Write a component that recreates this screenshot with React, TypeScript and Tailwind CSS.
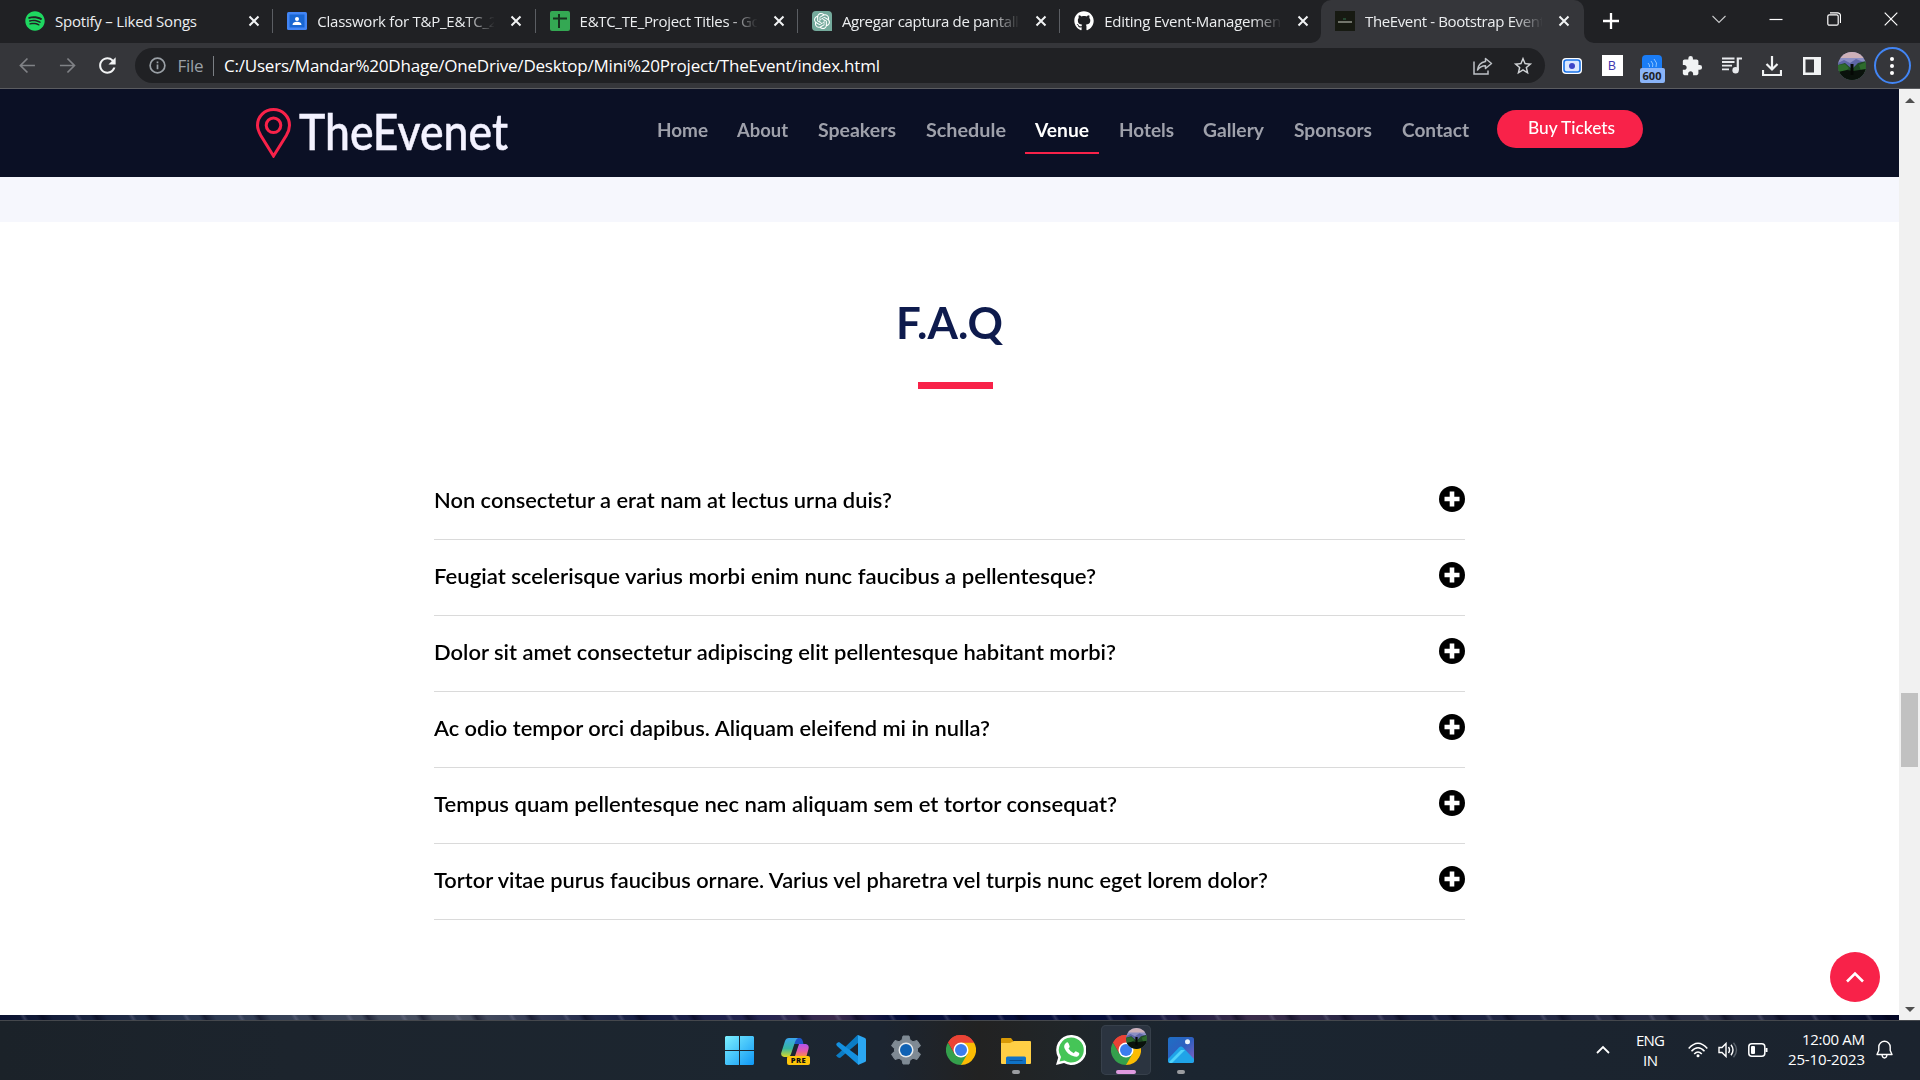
import React, { useLayoutEffect, useRef } from "react";
import { FaSpotify, FaGithub } from "react-icons/fa";
import { MdStarBorder, MdRefresh, MdExtension } from "react-icons/md";
import { SiOpenai } from "react-icons/si";

const UI = "font-['Open_Sans','Noto_Sans',sans-serif]";
const SITE = "font-['Lato','Open_Sans',sans-serif]";

/* A single line of text that spans `w` pixels, either by tracking or by widening its letters. */
function Fit({ w, className = "", stretch = false, children }: { w: number; className?: string; stretch?: boolean; children: string }) {
  const ref = useRef<HTMLSpanElement>(null);
  useLayoutEffect(() => {
    const el = ref.current;
    if (!el) return;
    el.style.letterSpacing = "0px";
    el.style.transform = "none";
    const natural = el.getBoundingClientRect().width;
    if (stretch) el.style.transform = `scaleX(${w / natural})`;
    else el.style.letterSpacing = `${(w - natural) / Math.max(1, children.length - 1)}px`;
  }, [w, stretch, children]);
  return (
    <span className="block shrink-0 whitespace-nowrap" style={{ width: w }}>
      <span ref={ref} className={`inline-block origin-left whitespace-nowrap ${className}`}>
        {children}
      </span>
    </span>
  );
}

function Cross({ className = "" }: { className?: string }) {
  return (
    <svg viewBox="0 0 12 12" className={`h-3 w-3 shrink-0 ${className}`} fill="none" stroke="#f1f3f4" strokeWidth="2">
      <path d="M1.5 1.5l9 9M10.5 1.5l-9 9" />
    </svg>
  );
}

const ClassroomIcon = () => (
  <svg viewBox="0 0 20 20" className="h-5 w-5">
    <rect y="1" width="20" height="18" rx="1.5" fill="#4285f4" />
    <rect x="2.5" y="3.5" width="15" height="13" fill="#1967d2" />
    <circle cx="10" cy="8" r="2" fill="#fff" />
    <path d="M5.5 14c0-2.2 2-3.200 4.500-3.200s4.500 1 4.500 3.200z" fill="#fff" />
  </svg>
);
const SheetsIcon = () => (
  <svg viewBox="0 0 20 20" className="h-5 w-5">
    <rect width="20" height="20" rx="2" fill="#34a853" />
    <path d="M9 3v14M3 7.500h14" stroke="#17301f" strokeWidth="2" />
  </svg>
);
const GptIcon = () => (
  <span className="flex h-5 w-5 items-center justify-center rounded-t-[4px] rounded-bl-[4px] bg-[#74aa9c]">
    <SiOpenai className="h-4 w-4 text-white" />
  </span>
);
const EventIcon = () => (
  <svg viewBox="0 0 20 20" className="h-5 w-5">
    <rect width="20" height="20" fill="#171a12" />
    <path d="M3 11h14" stroke="#a5a89d" strokeWidth="1.300" />
    <path d="M8 8h3" stroke="#28563a" strokeWidth="1.500" />
  </svg>
);

const tabs = [
  { icon: <FaSpotify className="h-5 w-5 text-[#1ed760]" />, title: "Spotify – Liked Songs", w: 142, fade: false },
  { icon: <ClassroomIcon />, title: "Classwork for T&P_E&TC_2", w: 180, fade: true },
  { icon: <SheetsIcon />, title: "E&TC_TE_Project Titles - Go", w: 181, fade: true },
  { icon: <GptIcon />, title: "Agregar captura de pantall", w: 177, fade: true },
  { icon: <FaGithub className="h-5 w-5 text-white" />, title: "Editing Event-Managemen", w: 177, fade: true },
];

function TabBody({ icon, title, w, fade }: { icon: React.ReactNode; title: string; w: number; fade: boolean }) {
  return (
    <>
      <span className="h-5 w-5 shrink-0">{icon}</span>
      <span
        className={`ml-[10px] w-[177px] shrink-0 text-[15px] leading-5 text-[#eceef0] ${UI} ${
          fade ? "[mask-image:linear-gradient(to_right,black_148px,transparent_178px)]" : ""
        }`}
      >
        <Fit w={w}>{title}</Fit>
      </span>
      <Cross className="ml-[16px]" />
    </>
  );
}

function TabStrip() {
  return (
    <div className="flex h-[43px] bg-[#202124]">
      <div className="flex h-full pl-[11px]">
        {tabs.map((t, i) => (
          <div key={t.title} className="flex h-[42px] w-[262.300px] shrink-0 items-center pl-[14px]">
            <TabBody {...t} />
            <span className={`ml-auto h-6 w-px ${i < 4 ? "bg-[#5b5e63]" : ""}`} />
          </div>
        ))}
      </div>
      <div className="relative -ml-[1.500px] flex h-[43px] w-[263px] shrink-0 items-center rounded-t-[10px] bg-[#35363a] pb-px pl-[14px]">
        <TabBody icon={<EventIcon />} title="TheEvent - Bootstrap Event" w={180} fade />
        <svg viewBox="0 0 10 10" className="absolute bottom-0 -left-[10px] h-[10px] w-[10px]">
          <path d="M10 0v10H0A10 10 0 0 0 10 0z" fill="#35363a" />
        </svg>
        <svg viewBox="0 0 10 10" className="absolute -right-[10px] bottom-0 h-[10px] w-[10px]">
          <path d="M0 0v10h10A10 10 0 0 1 0 0z" fill="#35363a" />
        </svg>
      </div>
      <svg viewBox="0 0 16 16" className="mt-[13px] ml-[19px] h-4 w-4" stroke="#fff" strokeWidth="2.300">
        <path d="M8 0v16M0 8h16" />
      </svg>
      <div className="mr-[22px] ml-auto flex h-[37px] items-center gap-[43.300px]">
        <svg viewBox="0 0 14 14" className="h-[14px] w-[14px]" fill="none" stroke="#c8c9cb" strokeWidth="1.100">
          <path d="M.5 4L7 10.500 13.500 4" />
        </svg>
        <svg viewBox="0 0 14 14" className="h-[14px] w-[14px]" stroke="#fff" strokeWidth="1.200">
          <path d="M.5 7.500h13" />
        </svg>
        <svg viewBox="0 0 14 14" className="h-[14px] w-[14px]" fill="none" stroke="#fff" strokeWidth="1.200">
          <rect x=".8" y="2.800" width="10.400" height="10.400" rx="1.500" />
          <path d="M3 .8h7.500a3 3 0 0 1 3 3V11" />
        </svg>
        <svg viewBox="0 0 14 14" className="h-[14px] w-[14px]" fill="none" stroke="#fff" strokeWidth="1.200">
          <path d="M.7.700l12.600 12.600M13.300.7L.7 13.300" />
        </svg>
      </div>
    </div>
  );
}

function Cell({ children }: { children: React.ReactNode }) {
  return <span className="flex w-10 shrink-0 items-center justify-center">{children}</span>;
}

function Avatar({ className = "" }: { className?: string }) {
  return (
    <svg viewBox="0 0 28 28" className={`rounded-full ${className}`}>
      <rect width="28" height="28" fill="#8c8fc4" />
      <path d="M0 0h28v6H0z" fill="#cdb0b8" />
      <path d="M0 11l6-3 6 3 6-4 10 4v6H0z" fill="#5e66a6" />
      <path d="M0 13l7-2 7 6 6-6 8-2v19H0z" fill="#1f4a25" />
      <path d="M0 13l7-1 4 4-7 6-4 1zM28 10l-7 3 2 6 5 1z" fill="#2e6b2c" />
      <path d="M0 20l9-2 6 1 13-2v11H0z" fill="#0a120c" />
      <path d="M12.500 12h3v11h-3z" fill="#050805" />
    </svg>
  );
}

function Toolbar() {
  return (
    <div className="flex h-[46px] items-center border-b border-[#5b5c60] bg-[#35363a] pr-2">
      <svg viewBox="0 0 18 18" className="ml-[19px] h-[17px] w-[17px]" fill="none" stroke="#808286" strokeWidth="1.800">
        <path d="M17 9H1.500M9 1.500L1.500 9 9 16.500" />
      </svg>
      <svg viewBox="0 0 18 18" className="ml-[23px] h-[17px] w-[17px]" fill="none" stroke="#808286" strokeWidth="1.800">
        <path d="M1 9h15.500M9 1.500L16.500 9 9 16.500" />
      </svg>
      <MdRefresh className="ml-[19px] h-[25px] w-[25px] text-[#f1f3f4]" />
      <div className="ml-[15px] flex h-[35px] w-[1410px] shrink-0 items-center rounded-full bg-[#202124]">
        <svg viewBox="0 0 18 18" className="ml-[14px] h-[17px] w-[17px] shrink-0" fill="none" stroke="#9aa0a6" strokeWidth="1.800">
          <circle cx="9" cy="9" r="7.800" />
          <path d="M9 8v5M9 4.700v1.800" />
        </svg>
        <div className={`ml-[12px] flex items-center text-[17px] leading-6 ${UI}`}>
          <Fit w={26} className="text-[#9aa0a6]">File</Fit>
          <span className="ml-[9px] h-5 w-[1.500px] bg-[#7b7f84]" />
          <span className="w-[10px]" />
          <Fit w={656} className="text-white">C:/Users/Mandar%20Dhage/OneDrive/Desktop/Mini%20Project/TheEvent/index.html</Fit>
        </div>
        <svg viewBox="0 0 20 18" className="ml-auto h-[18px] w-5" fill="none" stroke="#bdc1c6" strokeWidth="1.500">
          <path d="M1 4.500V17h14v-3.500" />
          <path d="M12.500 1.500l6 5-6 5V8.700C9 8.700 6.500 10 4.500 13c.5-4.500 3.500-7.800 8-8.500z" strokeLinejoin="round" />
        </svg>
        <MdStarBorder className="mr-[11px] ml-[19px] h-[22px] w-[22px] text-[#d0d3d6]" />
      </div>
      <div className="ml-[7.500px] flex items-center">
        <Cell>
          <svg viewBox="0 0 20 16" className="h-4 w-5">
            <rect width="20" height="16" rx="4" fill="#fff" />
            <rect x="2" y="2" width="16" height="12" rx="2.500" fill="#dbe8ff" stroke="#1a73e8" strokeWidth="1.600" />
            <circle cx="10" cy="8" r="3" fill="#3d46c8" />
          </svg>
        </Cell>
        <Cell>
          <span className="flex h-[21px] w-[21px] items-center justify-center bg-white font-['Liberation_Sans',sans-serif] text-[12px] leading-none text-[#4038b0]">B</span>
        </Cell>
        <Cell>
          <span className="mt-[7px] flex h-7 flex-col items-center">
            <svg viewBox="0 0 20 13" className="h-[13px] w-5 shrink-0">
              <path d="M0 13V4a4 4 0 0 1 4-4h12a4 4 0 0 1 4 4v9z" fill="#1a7cf5" />
              <path d="M6 8q2 2 1.500 4M9 6q3 3 1.500 6M12 4q4 4 2 8" stroke="#8fc4ff" fill="none" />
            </svg>
            <span className={`flex h-[15px] w-[25px] items-center justify-center rounded-[2px] bg-[#8ab4f8] text-[11px] leading-none font-bold text-[#202124] ${UI}`}>600</span>
          </span>
        </Cell>
        <Cell><MdExtension className="h-[22px] w-[22px] text-[#f1f3f4]" /></Cell>
        <Cell>
          <svg viewBox="0 0 20 17" className="h-[17px] w-5" fill="none" stroke="#e8eaed" strokeWidth="1.800">
            <path d="M0 1.500h12.500M0 5h12.500M0 8.700h10M0 12.300h7" />
            <path d="M15.800 13V1.500H20" strokeWidth="2.200" />
            <circle cx="13.600" cy="13.200" r="3.200" fill="#e8eaed" stroke="none" />
          </svg>
        </Cell>
        <Cell>
          <svg viewBox="0 0 20 20" className="h-5 w-5" fill="none" stroke="#f1f3f4" strokeWidth="2.200">
            <path d="M10 0v13M4.500 8L10 13.500 15.500 8M1 14v5h18v-5" />
          </svg>
        </Cell>
        <Cell>
          <svg viewBox="0 0 18 18" className="h-[18px] w-[18px]">
            <path d="M0 0h18v18H0zM2.500 2.500v13H11v-13z" fill="#f1f3f4" fillRule="evenodd" />
          </svg>
        </Cell>
        <Cell><Avatar className="h-7 w-7" /></Cell>
        <Cell>
          <span className="flex h-[37px] w-[37px] shrink-0 flex-col items-center justify-center gap-[3px] rounded-full border-2 border-[#4285f4]">
            <i className="h-1 w-1 rounded-full bg-white" />
            <i className="h-1 w-1 rounded-full bg-white" />
            <i className="h-1 w-1 rounded-full bg-white" />
          </span>
        </Cell>
      </div>
    </div>
  );
}

const nav = [
  { label: "Home", w: 51 },
  { label: "About", w: 51 },
  { label: "Speakers", w: 78 },
  { label: "Schedule", w: 80 },
  { label: "Venue", w: 54 },
  { label: "Hotels", w: 55 },
  { label: "Gallery", w: 61 },
  { label: "Sponsors", w: 78 },
  { label: "Contact", w: 67 },
];

function SiteHeader() {
  return (
    <header className={`flex h-[88px] shrink-0 bg-[#0b1025] ${SITE}`}>
      <svg viewBox="0 0 36 50" className="mt-[19px] ml-[256px] h-[50px] w-9" fill="none" stroke="#f82249" strokeWidth="3">
        <path d="M17.500 1.500C8.500 1.500 1.500 8.600 1.500 17.300c0 4 1.400 6.800 3.300 10.200L17.500 48l12.800-20.500c2-3.400 3.200-6.200 3.200-10.200C33.500 8.600 26.500 1.500 17.500 1.500z" />
        <circle cx="17.500" cy="17.300" r="7.300" />
      </svg>
      <div className="mt-[11px] ml-[7px] text-[50px] leading-[62px] font-medium text-[#f3f2ff] [-webkit-text-stroke:0.500px_#f3f2ff]">
        <Fit stretch w={209}>TheEvenet</Fit>
      </div>
      <nav className="mt-[26px] ml-[139px] flex h-[39px] gap-[10px]">
        {nav.map((n) => {
          const active = n.label === "Venue";
          return (
            <div
              key={n.label}
              className={`h-full shrink-0 px-[9.800px] pt-[3px] text-[18px] leading-6 font-bold ${
                active ? "border-b-2 border-[#f82249] text-white" : "text-[#9fa1ab]"
              }`}
            >
              <Fit stretch w={n.w}>{n.label}</Fit>
            </div>
          );
        })}
      </nav>
      <button className="mt-[21px] ml-[19px] flex h-[38px] w-[146px] items-center justify-center rounded-full bg-[#f82249] pb-[2px] text-[17px] font-medium text-white">
        <Fit stretch w={87}>Buy Tickets</Fit>
      </button>
    </header>
  );
}

const questions = [
  { q: "Non consectetur a erat nam at lectus urna duis?", w: 458 },
  { q: "Feugiat scelerisque varius morbi enim nunc faucibus a pellentesque?", w: 662 },
  { q: "Dolor sit amet consectetur adipiscing elit pellentesque habitant morbi?", w: 682 },
  { q: "Ac odio tempor orci dapibus. Aliquam eleifend mi in nulla?", w: 556 },
  { q: "Tempus quam pellentesque nec nam aliquam sem et tortor consequat?", w: 683 },
  { q: "Tortor vitae purus faucibus ornare. Varius vel pharetra vel turpis nunc eget lorem dolor?", w: 834 },
];

function Faq() {
  return (
    <section className={`relative flex h-[793px] shrink-0 flex-col bg-white ${SITE}`}>
      <h2 className="mt-[73px] ml-[896px] text-[44px] leading-[54px] font-bold text-[#0e1b4d]">
        <Fit stretch w={107}>F.A.Q</Fit>
      </h2>
      <div className="mt-[33px] ml-[918px] h-[7px] w-[75px] bg-[#f82249]" />
      <ul className="mt-[75px] ml-[434px] w-[1031px]">
        {questions.map(({ q, w }) => (
          <li key={q} className="flex h-[76px] justify-between border-b border-[#dadada] text-[20.500px] leading-[26px] font-semibold text-black">
            <span className="mt-[23px]">
              <Fit stretch w={w}>{q}</Fit>
            </span>
            <svg viewBox="0 0 26 26" className="mt-[22px] h-[26px] w-[26px]">
              <circle cx="13" cy="13" r="13" fill="#000" />
              <path d="M13 5.500v15M5.500 13h15" stroke="#fff" strokeWidth="4.600" />
            </svg>
          </li>
        ))}
      </ul>
      <button className="absolute right-[19px] bottom-[13px] flex h-[50px] w-[50px] items-center justify-center rounded-full bg-[#f82249]">
        <svg viewBox="0 0 18 12" className="h-3 w-[18px]" fill="none" stroke="#fff" strokeWidth="2.600">
          <path d="M1 10.500l8-8 8 8" />
        </svg>
      </button>
    </section>
  );
}

function Scrollbar() {
  return (
    <div className="flex w-[21px] shrink-0 flex-col items-center bg-[#f1f1f1]">
      <svg viewBox="0 0 10 5" className="mt-[9px] h-[5px] w-[10px]"><path d="M0 5l5-5 5 5z" fill="#505050" /></svg>
      <div className="mt-[590px] h-[74px] w-[17px] bg-[#c1c1c1]" />
      <svg viewBox="0 0 10 5" className="mt-auto mb-[8px] h-[5px] w-[10px]"><path d="M0 0l5 5 5-5z" fill="#505050" /></svg>
    </div>
  );
}

function Chrome() {
  return (
    <svg viewBox="0 0 30 30" className="h-[30px] w-[30px]">
      <path d="M15 15L2 7.500A15 15 0 0 1 28 7.500z" fill="#ea4335" />
      <path d="M15 15V7.500h13A15 15 0 0 1 15 30z" fill="#fbbc04" />
      <path d="M2 7.500A15 15 0 0 0 15 30l6.500-11.200L15 15l-6.500 3.700z" fill="#34a04c" />
      <path d="M15 7.500h13A15 15 0 0 0 2 7.500l6.500 11.200z" fill="#ea4335" />
      <circle cx="15" cy="15" r="7.500" fill="#fff" />
      <circle cx="15" cy="15" r="6" fill="#3b7ded" />
    </svg>
  );
}

function TaskIcon({ children, dot, active }: { children: React.ReactNode; dot?: boolean; active?: boolean }) {
  return (
    <div className={`relative flex h-[50px] w-[50px] items-center justify-center rounded-[5px] ${active ? "bg-[#2b3440] ring-1 ring-[#37404b] ring-inset" : ""}`}>
      {children}
      {dot && <span className="absolute bottom-px left-[21px] h-1 w-2 rounded-full bg-[#9a9ca0]" />}
      {active && <span className="absolute bottom-px left-[15px] h-1 w-5 rounded-full bg-[#df9be0]" />}
    </div>
  );
}

function Taskbar() {
  return (
    <footer className="flex h-[60px] shrink-0 border-t border-[#45484d] bg-[linear-gradient(to_right,#1b2229_0%,#1c242d_15%,#1c2630_40%,#1c2531_46%,#222222_51%,#20262a_56%,#1b2530_61%,#1b232e_100%)] text-white">
      <div className="mt-1 ml-[714px] flex gap-[5px]">
        <TaskIcon>
          <svg viewBox="0 0 29 29" className="h-[29px] w-[29px]">
            <defs>
              <linearGradient id="win" gradientUnits="userSpaceOnUse" x1="0" y1="0" x2="29" y2="29">
                <stop stopColor="#7cf0ff" />
                <stop offset="1" stopColor="#0f97f5" />
              </linearGradient>
            </defs>
            <path d="M1 0h13v14H0V1zM15 0h13l1 1v13H15zM0 15h14v14H1l-1-1zM15 15h14v13l-1 1H15z" fill="url(#win)" />
          </svg>
        </TaskIcon>
        <span className="-ml-[3px]" />
        <TaskIcon>
          <svg viewBox="0 0 30 28" className="mt-[3px] h-7 w-[30px]">
            <defs>
              <linearGradient id="cpa" x1="0" y1="0" x2="0" y2="1">
                <stop stopColor="#3aa5ee" />
                <stop offset=".55" stopColor="#37b6a0" />
                <stop offset="1" stopColor="#d8d928" />
              </linearGradient>
              <linearGradient id="cpb" x1="0" y1="0" x2="0" y2="1">
                <stop stopColor="#b153ef" />
                <stop offset=".6" stopColor="#e75aa8" />
                <stop offset="1" stopColor="#f88a4d" />
              </linearGradient>
            </defs>
            <path d="M12 0h7q2.500 0 3.500 6H13z" fill="#1d55c8" />
            <path d="M8 0h9q-2 1-3 4l-4 12q-1 3-4 3H3q-4-1-2.500-5L4 3q1-3 4-3z" fill="url(#cpa)" />
            <path d="M18 6h7q3.500 1 2.500 5l-2 7H14z" fill="url(#cpb)" />
            <rect x="6" y="18" width="23" height="9" rx="2" fill="#fec50b" />
            <text x="17.500" y="25.400" textAnchor="middle" fontSize="7.600" fontWeight="800" fontFamily="Open Sans, sans-serif" fill="#111" letterSpacing=".4">PRE</text>
          </svg>
        </TaskIcon>
        <TaskIcon>
          <svg viewBox="0 0 30 30" className="h-[30px] w-[30px]">
            <path d="M22 .5L3 19 0 21.500l2 2 2 .5L22 9z" transform="translate(0 -1)" fill="#0b7cc4" />
            <path d="M22 29.500L1 11q-1.500-1.800 0-3l2-1L22 21z" fill="#1490df" />
            <path d="M22 0l7 3q1 .5 1 1.500v21q0 1-1 1.500l-7 3z" fill="#2ba7f2" />
          </svg>
        </TaskIcon>
        <TaskIcon>
          <svg viewBox="0 0 30 30" className="h-[30px] w-[30px]">
            <path
              d="M12 1h6l1 4 3 1.700 4-1.200 3.500 5.200-3 3v2.600l3 3-3.500 5.200-4-1.200L19 25l-1 4h-6l-1-4-3-1.700-4 1.200-3.500-5.200 3-3v-2.600l-3-3L4 5.500l4 1.200L11 5z"
              fill="#7f8a94"
              stroke="#7f8a94"
              strokeLinejoin="round"
            />
            <circle cx="15" cy="15" r="7.500" fill="#e7ebee" />
            <circle cx="15" cy="15" r="6" fill="#0f62b4" />
          </svg>
        </TaskIcon>
        <TaskIcon><Chrome /></TaskIcon>
        <TaskIcon dot>
          <svg viewBox="0 0 30 28" className="mt-[2px] h-7 w-[30px]">
            <path d="M0 2q0-1 1-1h9l3 4-2 3H0z" fill="#d99a06" />
            <path d="M0 6h9l4-2h16q1 0 1 1v21q0 1-1 1H1q-1 0-1-1z" fill="#ffcf45" />
            <path d="M5 27v-6q0-1.500 1.500-1.500h17q1.500 0 1.500 1.500v6z" fill="#0f72c6" />
            <path d="M8.500 23.500h13" stroke="#0a4c8c" />
          </svg>
        </TaskIcon>
        <TaskIcon>
          <svg viewBox="0 0 30 30" className="h-[30px] w-[30px]">
            <path d="M15 0a15 15 0 1 1-7 28L0 30l2.200-7.500A15 15 0 0 1 15 0z" fill="#fff" />
            <path d="M15 2.500a12.500 12.500 0 1 1-6.500 23L3.500 26.500 5 22A12.500 12.500 0 0 1 15 2.500z" fill="#45c557" />
            <path d="M10 8q1.500-1.500 2.500.3l1.200 2.900q.2.700-1.200 2.300 1.800 3.400 5.300 4.700 1.400-2 2-1.900l3 1.400q.8.500.4 1.700c-.7 2-2.800 2.600-4.800 2.100-5-1.200-8.200-4.200-10-8.500-.6-2 0-3.800 1.600-5z" fill="#fff" />
          </svg>
        </TaskIcon>
        <TaskIcon active>
          <Chrome />
          <Avatar className="absolute top-[3px] right-[4px] h-[21px] w-[21px]" />
        </TaskIcon>
        <TaskIcon dot>
          <svg viewBox="0 0 26 26" className="h-[26px] w-[26px]">
            <defs>
              <linearGradient id="ph" x1="0" y1="0" x2="1" y2="1">
                <stop stopColor="#1e6fc4" />
                <stop offset=".5" stopColor="#2e5fc0" />
                <stop offset="1" stopColor="#8a5fc0" />
              </linearGradient>
            </defs>
            <rect width="26" height="26" rx="2.500" fill="url(#ph)" />
            <path d="M0 22l11-11.500q2-2 4 0L26 22v2q0 2-2 2H2q-2 0-2-2z" fill="#1fa4e8" />
            <path d="M1 25L13 13l4 0-13 13H2z" fill="#4fd3fa" />
            <circle cx="19.500" cy="4.800" r="2.500" fill="#eaf3fb" />
          </svg>
        </TaskIcon>
      </div>
      <div className={`mr-[27px] ml-auto flex h-[57px] items-center text-[15px] leading-5 ${UI}`}>
        <svg viewBox="0 0 14 9" className="mr-[26px] h-[9px] w-[14px]" fill="none" stroke="#fff" strokeWidth="1.800">
          <path d="M1 8l6-6 6 6" />
        </svg>
        <div className="mr-[23px] flex flex-col items-center">
          <Fit w={29}>ENG</Fit>
          <Fit w={15}>IN</Fit>
        </div>
        <svg viewBox="0 0 20 16" className="mr-[10px] h-4 w-5" fill="none" stroke="#fff" strokeWidth="1.500">
          <path d="M.7 6.500Q10-4 19.300 6.500M3.500 9.300q6.500-7 13 0M6.200 12q3.800-4 7.600 0" />
          <circle cx="10" cy="13.700" r="1.500" fill="#fff" stroke="none" />
        </svg>
        <svg viewBox="0 0 20 16" className="mr-[10px] h-4 w-5" fill="none" stroke="#fff" strokeWidth="1.400">
          <path d="M1 5.500h3L8 1.500v13L4 10.500H1zM10.500 5q2 3 0 6M13 2.800q4 5.200 0 10.400" />
          <path d="M15.500.8q6 7.200 0 14.400" stroke="#59616a" />
        </svg>
        <svg viewBox="0 0 20 14" className="mr-[20px] h-[14px] w-5" fill="none" stroke="#fff" strokeWidth="1.500">
          <rect x=".8" y=".8" width="16" height="12.400" rx="3" />
          <path d="M18.500 5v4" strokeWidth="2" />
          <rect x="3" y="3" width="4" height="8" rx="1" fill="#fff" stroke="none" />
        </svg>
        <div className="mr-[11px] flex w-[77px] -translate-y-px flex-col items-end">
          <Fit w={63}>12:00 AM</Fit>
          <Fit w={77}>25-10-2023</Fit>
        </div>
        <svg viewBox="0 0 17 19" className="h-[19px] w-[17px]" fill="none" stroke="#fff" strokeWidth="1.400">
          <path d="M1 14.500l1.800-4V7a5.700 5.700 0 0 1 11.400 0v3.500l1.800 4zM6 15q.5 3 2.500 3t2.500-3" strokeLinejoin="round" />
        </svg>
      </div>
    </footer>
  );
}

export default function App() {
  return (
    <div className="flex h-[1080px] w-[1920px] flex-col overflow-hidden bg-[#202124]">
      <TabStrip />
      <Toolbar />
      <div className="flex h-[931px] shrink-0">
        <main className="flex w-[1899px] flex-col">
          <SiteHeader />
          <div className="h-[45px] shrink-0 bg-[#f6f7fd]" />
          <Faq />
          <div className="h-[5px] shrink-0 bg-[repeating-linear-gradient(60deg,transparent_0px,transparent_19px,rgba(150,150,180,0.250)_22px,transparent_25px,transparent_33px,rgba(0,0,20,0.500)_38px,transparent_47px),linear-gradient(to_right,#0a1230_0%,#29364f_10%,#4b5262_24%,#141c42_34%,#242450_40%,#3a2a4c_44%,#050d3a_47%,#060e3c_58%,#3a2c4a_66%,#1a2140_75%,#2c3046_90%,#030828_100%)]" />
        </main>
        <Scrollbar />
      </div>
      <Taskbar />
    </div>
  );
}
